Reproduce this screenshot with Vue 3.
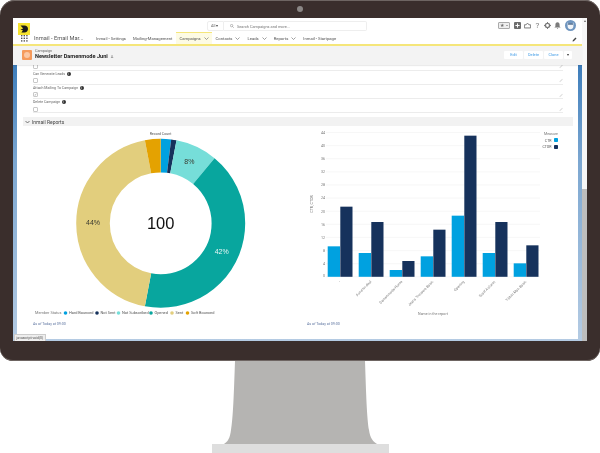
<template>
  <div class="stage">
    <div class="monitor">
      <span class="camera"></span>
      <div class="screen">
        <div class="top-row">
          <div class="logo">
            <svg width="12" height="12" viewBox="0 0 12 12">
              <rect width="12" height="12" fill="#f6e32f" />
              <path d="M2.5 2.6H6.4C8.6 2.6 10 4.1 10 6C10 7.9 8.6 9.4 6.4 9.4H3.4L4.9 7.3L2.4 6.6L5.2 5.4Z" fill="#1a1a1a" />
            </svg>
          </div>
          <div class="search">
            <div class="scope">All <span class="caret"></span></div>
            <div class="search-box">
              <svg width="4" height="4" viewBox="0 0 10 10">
                <circle cx="4" cy="4" r="3" fill="none" stroke="#888" stroke-width="1.4" />
                <path d="M6.2 6.2L9.5 9.5" stroke="#888" stroke-width="1.4" />
              </svg>
              Search Campaigns and more...
            </div>
          </div>
          <div class="tools">
            <div class="fav"><span class="star">★</span><span class="fav-caret"></span></div>
            <svg width="7" height="7" viewBox="0 0 10 10">
              <rect width="10" height="10" rx="1.5" fill="#6d6d6d" />
              <path d="M5 2V8M2 5H8" stroke="#fff" stroke-width="1.4" />
            </svg>
            <svg width="7" height="7" viewBox="0 0 10 10">
              <path d="M3 4L5 1.5L7 4H9.5V8.5H.5V4Z" fill="none" stroke="#7b7b7b" stroke-width="1.4" />
            </svg>
            <span class="help">?</span>
            <svg width="7" height="7" viewBox="0 0 10 10">
              <circle cx="5" cy="5" r="3" fill="none" stroke="#7b7b7b" stroke-width="2" />
              <path d="M5 0V2M5 8V10M0 5H2M8 5H10" stroke="#7b7b7b" stroke-width="1.4" />
            </svg>
            <svg width="7" height="7" viewBox="0 0 10 10">
              <path d="M5 .5C7 .5 8 2 8 4V6.5L9.5 8H.5L2 6.5V4C2 2 3 .5 5 .5ZM4 8.6H6L5 10Z" fill="#7b7b7b" />
            </svg>
            <svg width="11" height="11" viewBox="0 0 11 11">
              <circle cx="5.5" cy="5.5" r="5.5" fill="#6f95bf" />
              <path d="M2.6 2.4L4 3.4H7L8.4 2.4V6.6C8.4 8.2 7 9.2 5.5 9.2C4 9.2 2.6 8.2 2.6 6.6Z" fill="#f2f5f8" />
              <path d="M3 3.4H8V4.6H3Z" fill="#2f4f78" />
            </svg>
          </div>
        </div>

        <nav class="nav">
          <svg class="apps" width="7" height="7" viewBox="0 0 7 7">
            <g fill="#555">
              <rect v-for="dot in appDots" :key="dot.key" :x="dot.x" :y="dot.y" width="1.4" height="1.4" />
            </g>
          </svg>
          <span class="app-name">Inmail - Email Mar...</span>
          <div class="nav-items">
            <div
              v-for="item in navItems"
              :key="item.label"
              class="nav-item"
              :class="{ active: item.active }"
            >
              {{ item.label }}
              <svg v-if="item.menu" width="5" height="3" viewBox="0 0 5 3">
                <path d="M.5 .5L2.5 2.5L4.5 .5" fill="none" stroke="#777" stroke-width=".7" />
              </svg>
            </div>
          </div>
          <svg class="nav-edit" width="5" height="5" viewBox="0 0 10 10">
            <path d="M1 9L1.6 6.4L7 1L9 3L3.6 8.4Z" fill="#444" />
          </svg>
        </nav>

        <header class="page-head">
          <div class="record-icon"><span></span></div>
          <div class="record-title">
            <div class="record-type">Campaign</div>
            <div class="record-name">Newsletter Damenmode Juni <span class="follow">A</span></div>
          </div>
          <div class="actions">
            <button class="btn">Edit</button>
            <button class="btn">Delete</button>
            <button class="btn">Clone</button>
            <button class="btn more"><span class="caret dark"></span></button>
          </div>
        </header>

        <div class="content">
          <div class="card">
            <div class="field first">
              <span class="check"></span>
              <span class="pencil"></span>
            </div>
            <div v-for="f in fields" :key="f.label" class="field">
              <div>
                <div class="field-label">{{ f.label }} <i class="info">i</i></div>
                <span class="check"><template v-if="f.checked">✓</template></span>
              </div>
              <span class="pencil"></span>
            </div>

            <div class="section-head">
              <svg width="5" height="4" viewBox="0 0 5 3">
                <path d="M.5 .5L2.5 2.5L4.5 .5" fill="none" stroke="#555" stroke-width=".8" />
              </svg>
              Inmail Reports
            </div>

            <div class="charts">
              <svg class="chart" viewBox="17 126 283 213">
                <text x="160.5" y="133.5" class="small mid">Record Count</text>
                <circle
                  v-for="s in donut"
                  :key="s.label"
                  cx="160.7"
                  cy="222.3"
                  r="67.7"
                  fill="none"
                  :stroke="s.color"
                  stroke-width="33.6"
                  pathLength="100"
                  :stroke-dasharray="`${s.value} ${100 - s.value}`"
                  :stroke-dashoffset="-s.start"
                  transform="rotate(-90 160.7 222.3)"
                />
                <text x="160.7" y="228.2" class="total">100</text>
                <text x="189.3" y="163" class="pct">8%</text>
                <text x="221.7" y="253" class="pct light">42%</text>
                <text x="93" y="224" class="pct">44%</text>
                <text x="35" y="313.4" class="legend muted">Member Status</text>
                <g v-for="s in donut" :key="s.label + 'l'">
                  <circle :cx="s.dot" cy="312" r="1.8" :fill="s.color" />
                  <text :x="s.dot + 3.5" y="313.4" class="legend">{{ s.label }}</text>
                </g>
                <text x="33" y="324.3" class="small asof">As of Today at 09:00</text>
              </svg>

              <svg class="chart" viewBox="300 126 278 213">
                <g v-for="t in ticks" :key="t.label">
                  <line x1="326" x2="540" :y1="t.y" :y2="t.y" stroke="#f4f4f4" stroke-width=".7" />
                  <text x="325" :y="t.ly" class="small end muted">{{ t.label }}</text>
                </g>
                <text class="small mid muted" transform="translate(313 203) rotate(-90)">CTR, CTOR</text>
                <g v-for="b in bars" :key="b.label">
                  <rect :x="b.x1" :y="b.ctr" width="12.3" :height="275.8 - b.ctr" fill="#00a1e0" />
                  <rect :x="b.x2" :y="b.ctor" width="12.2" :height="275.8 - b.ctor" fill="#16325c" />
                  <text class="small end muted" :transform="`translate(${b.x1 + 13} 281) rotate(-45)`">{{ b.label }}</text>
                </g>
                <text x="433" y="313.5" class="small mid muted">Name in the report</text>
                <text x="558" y="133.6" class="small end muted">Measure</text>
                <text x="551.5" y="140.6" class="small end">CTR</text>
                <rect x="554" y="137" width="4" height="4" rx=".8" fill="#00a1e0" />
                <text x="551.5" y="147.4" class="small end">CTOR</text>
                <rect x="554" y="144" width="4" height="4" rx=".8" fill="#16325c" />
                <text x="307" y="324.3" class="small asof">As of Today at 09:00</text>
              </svg>
            </div>
          </div>
        </div>
        <div class="scrollbar"><span class="arrow"></span><span class="thumb"></span></div>
        <div class="status-tip">javascript:void(0)</div>
      </div>
    </div>
    <svg class="stand" width="600" height="92" viewBox="0 361 600 92">
      <path d="M235 361H365C366 392 367 420 369 430C370 438 373 442 378 444.5H223C228 442 230 438 231 430C233 420 234 392 235 361Z" fill="#b5b4b2" />
      <rect x="212" y="444" width="177" height="9" fill="#dedede" />
    </svg>
  </div>
</template>

<script setup>
const appDots = [];
for (let r = 0; r < 3; r++) {
  for (let c = 0; c < 3; c++) {
    appDots.push({ key: `${r}-${c}`, x: c * 2.6, y: r * 2.6 });
  }
}

const navItems = [
  { label: "Inmail - Settings" },
  { label: "Mailing-Management" },
  { label: "Campaigns", menu: true, active: true },
  { label: "Contacts", menu: true },
  { label: "Leads", menu: true },
  { label: "Reports", menu: true },
  { label: "Inmail - Startpage" },
];

const fields = [
  { label: "Can Generate Leads" },
  { label: "Attach Mailing To Campaign", checked: true },
  { label: "Delete Campaign" },
];

const colors = [
  ["Hard Bounced", 2, "#00a1e0", 65.5],
  ["Not Sent", 1, "#16325c", 97],
  ["Not Subscribed", 8, "#76ded9", 118.5],
  ["Opened", 42, "#08a69e", 151],
  ["Sent", 44, "#e2ce7d", 172],
  ["Soft Bounced", 3, "#e4a201", 187.5],
];

let start = 0;
const donut = colors.map(([label, value, color, dot]) => {
  const seg = { label, value, color, dot, start };
  start += value;
  return seg;
});

// tick labels: 0 sits a little inside the plot
const ticks = [];
for (let v = 0; v <= 44; v += 4) {
  const y = 275.8 - v * 3.28;
  ticks.push({ label: v, y, ly: v === 0 ? y - 0.2 : y + 1.4 });
}

const barData = [
  ["-", 376, 257],
  ["Autumn-deal", 396, 303],
  ["Damenmode Home", 447, 420],
  ["Jeans Trousers Basic", 406, 326],
  ["Opening", 284, 44],
  ["Scarf Autumn", 396, 303],
  ["T-Shirt Man Basic", 427, 373],
];

const bars = barData.map(([label, a, b], i) => ({
  label,
  x1: 327.7 + i * 31,
  x2: 340.3 + i * 31,
  ctr: 120 + a / 3,
  ctor: 120 + b / 3,
}));
</script>

<style>
html,
body {
  margin: 0;
  background: #fff;
  overflow: hidden;
}
</style>

<style scoped>
.stage {
  width: 600px;
  height: 453px;
  font-family: Roboto, "Liberation Sans", sans-serif;
  color: #444;
  overflow: hidden;
}

.monitor {
  position: relative;
  box-sizing: border-box;
  height: 361px;
  padding: 18px 13px 20px;
  background: #3a2e2c;
  border-radius: 15px 15px 13px 13px;
  box-shadow: inset 0 1px #6e6562, inset 0 -1px #6e6562;
}

.camera {
  position: absolute;
  top: 6px;
  left: 297px;
  width: 6px;
  height: 6px;
  border-radius: 50%;
  background: #8b8785;
}

.screen {
  position: relative;
  display: flex;
  flex-direction: column;
  height: 323px;
  padding-right: 5px;
  box-sizing: border-box;
  background: #fff;
  overflow: hidden;
  filter: blur(0.4px);
}

.top-row {
  display: flex;
  align-items: flex-start;
  height: 14px;
  padding: 2px 6px 0 5px;
  box-sizing: border-box;
}

.logo {
  height: 12px;
}

.search {
  display: flex;
  margin-left: 177px;
  height: 10px;
  margin-top: 1px;
}

.scope {
  width: 17px;
  box-sizing: border-box;
  border: 1px solid #eee;
  border-radius: 2px 0 0 2px;
  font-size: 3.9px;
  line-height: 8px;
  padding-left: 3px;
  color: #666;
}

.caret {
  display: inline-block;
  border-left: 1.8px solid transparent;
  border-right: 1.8px solid transparent;
  border-top: 2.2px solid #444;
  vertical-align: middle;
}

.search-box {
  display: flex;
  align-items: center;
  gap: 3px;
  width: 143px;
  box-sizing: border-box;
  border: 1px solid #eee;
  border-left: 0;
  border-radius: 0 2px 2px 0;
  padding-left: 6px;
  font-size: 3.9px;
  color: #777;
}

.tools {
  display: flex;
  align-items: center;
  gap: 3.7px;
  margin-left: auto;
  height: 11px;
}

.fav {
  display: flex;
  align-items: center;
  box-sizing: border-box;
  width: 12px;
  height: 7px;
  border: 0.6px solid #aaa;
  border-radius: 1px;
  background: #eee;
}

.star {
  font-size: 5px;
  line-height: 5px;
  width: 7px;
  text-align: center;
  color: #6f6f6f;
}

.fav-caret {
  border-left: 1.2px solid transparent;
  border-right: 1.2px solid transparent;
  border-top: 1.5px solid #666;
}

.help {
  font-size: 8px;
  width: 5px;
  text-align: center;
  color: #7b7b7b;
}

.nav {
  display: flex;
  align-items: center;
  height: 14px;
  padding-left: 8px;
  border-bottom: 2px solid #f5e67a;
  box-sizing: border-box;
  position: relative;
}

.apps {
  flex: none;
}

.app-name {
  width: 56px;
  margin-left: 6px;
  font-size: 5.7px;
  color: #555;
  white-space: nowrap;
}

.nav-items {
  display: flex;
  height: 100%;
  margin-left: 2.5px;
}

.nav-item {
  display: flex;
  align-items: center;
  gap: 3px;
  padding: 0 3.5px;
  font-size: 4.2px;
  color: #555;
  white-space: nowrap;
  box-sizing: border-box;
}

.nav-item.active {
  background: #fdfbe4;
  border-top: 1px solid #f5e67a;
}

.nav-edit {
  position: absolute;
  right: 5px;
  top: 4.5px;
}

.page-head {
  display: flex;
  align-items: center;
  height: 19px;
  padding: 0 10px 2px 9px;
  box-sizing: border-box;
  background: #f3f3f3;
  box-shadow: 0 1px 1px rgba(0, 0, 0, 0.08);
  position: relative;
  z-index: 1;
}

.record-icon {
  display: flex;
  align-items: center;
  justify-content: center;
  width: 10px;
  height: 10px;
  border-radius: 1px;
  background: #f59a5c;
}

.record-icon span {
  width: 6px;
  height: 6px;
  border-radius: 50%;
  background: #fbc7a4;
}

.record-title {
  margin-left: 3px;
}

.record-type {
  font-size: 3.8px;
  line-height: 4.5px;
  color: #666;
}

.record-name {
  font-size: 5.6px;
  line-height: 7px;
  font-weight: 700;
  color: #222;
}

.follow {
  margin-left: 1.5px;
  font-size: 4px;
  font-weight: 400;
  color: #777;
}

.actions {
  display: flex;
  gap: 1px;
  margin-top: 1px;
  margin-left: auto;
}

.btn {
  height: 8px;
  padding: 0;
  width: 19px;
  border: 0;
  border-radius: 1px;
  background: #fff;
  color: #3f9be6;
  font-family: inherit;
  font-size: 3.9px;
  line-height: 8px;
}

.btn.more {
  width: 8px;
}

.caret.dark {
  border-top-color: #333;
}

.content {
  flex: 1;
  display: flex;
  min-height: 0;
  padding: 0 4px 2px;
  background: linear-gradient(#3d7dbb, #7ca7d1 35%, #b4cbe3);
}

.scrollbar {
  position: absolute;
  top: 0;
  right: 0;
  bottom: 0;
  width: 5px;
  background: #f7f7f7;
  display: flex;
  flex-direction: column;
  justify-content: space-between;
  align-items: center;
}

.arrow {
  margin-top: 2px;
  border-left: 1.5px solid transparent;
  border-right: 1.5px solid transparent;
  border-bottom: 2px solid #666;
}

.thumb {
  width: 100%;
  height: 152px;
  background: #bdbdbd;
}

.card {
  flex: 1;
  min-width: 0;
  background: #fff;
  overflow: hidden;
}

.field {
  display: flex;
  justify-content: space-between;
  align-items: flex-end;
  box-sizing: border-box;
  height: 14.2px;
  margin: 0 15px 0 16px;
  border-bottom: 0.7px solid #ececec;
  padding-bottom: 0.6px;
}

.field.first {
  height: 5.6px;
}

.field-label {
  display: flex;
  align-items: center;
  gap: 1.5px;
  height: 6px;
  margin-bottom: 1.5px;
  font-size: 3.6px;
  color: #666;
}

.info {
  display: inline-block;
  width: 4px;
  height: 4px;
  border-radius: 50%;
  background: #333;
  color: #fff;
  font-size: 3px;
  line-height: 4px;
  text-align: center;
  font-style: normal;
}

.check {
  display: block;
  box-sizing: border-box;
  width: 5px;
  height: 5px;
  border: 0.6px solid #c8c8c8;
  border-radius: 1px;
  font-size: 4px;
  line-height: 4px;
  text-align: center;
  color: #888;
}

.pencil {
  width: 4px;
  height: 0.8px;
  margin-bottom: 2px;
  background: #ddd;
  transform: rotate(-45deg);
}

.section-head {
  display: flex;
  align-items: center;
  gap: 2px;
  height: 9px;
  margin: 4px 5px 0 6px;
  padding-left: 2px;
  background: #f2f2f2;
  font-size: 5px;
  color: #444;
}

.charts {
  display: grid;
  grid-template-columns: 283px 278px;
  margin-top: 1px;
}

.chart {
  display: block;
  width: 100%;
  height: 213px;
}

.small {
  font-size: 3.6px;
  fill: #555;
}

.legend {
  font-size: 3.9px;
  fill: #555;
}

.muted {
  fill: #777;
}

.asof {
  fill: #5d74a0;
}

.mid {
  text-anchor: middle;
}

.end {
  text-anchor: end;
}

.total {
  font-family: "Liberation Sans", sans-serif;
  font-size: 16.5px;
  fill: #111;
  text-anchor: middle;
}

.pct {
  font-family: "Liberation Sans", sans-serif;
  font-size: 7px;
  fill: #3a3a30;
  text-anchor: middle;
}

.pct.light {
  fill: #e8f6f5;
}

.status-tip {
  position: absolute;
  left: 1px;
  bottom: 0;
  padding: 0 1.5px;
  height: 6px;
  background: #eee;
  border: 0.5px solid #ccc;
  border-bottom: 0;
  font-size: 3.5px;
  line-height: 6px;
  color: #555;
}

.stand {
  display: block;
}
</style>
